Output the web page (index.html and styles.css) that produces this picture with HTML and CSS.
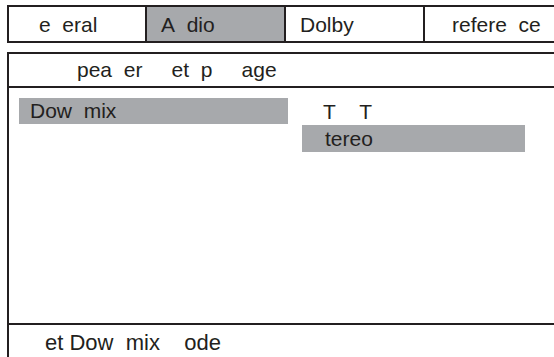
FILE: index.html
```html
<!DOCTYPE html>
<html lang="en">
<head>
    <meta charset="UTF-8">
    <meta name="viewport" content="width=device-width, initial-scale=1.0">
    <title>Speaker Setup</title>
    <link rel="stylesheet" href="styles.css">
</head>

<body>
    <div class="screen">
        <!-- Top menu tabs -->
        <div class="tabs">
            <div class="tab tab-first">e&nbsp;&nbsp;eral</div>
            <div class="tab active">A&nbsp;&nbsp;dio</div>
            <div class="tab">Dolby</div>
            <div class="tab tab-last">refere&nbsp;&nbsp;ce</div>
        </div>

        <!-- Setup page -->
        <div class="panel">
            <div class="panel-head">pea&nbsp;&nbsp;er&nbsp;&nbsp;&nbsp;&nbsp;&nbsp;et&nbsp;&nbsp;p&nbsp;&nbsp;&nbsp;&nbsp;&nbsp;age</div>

            <div class="panel-body">
                <div class="items">
                    <div class="item selected">Dow&nbsp;&nbsp;mix</div>
                </div>
                <div class="options">
                    <div class="option option-lt">T&nbsp;&nbsp;&nbsp;&nbsp;T</div>
                    <div class="option selected">tereo</div>
                </div>
            </div>

            <div class="panel-foot">et Dow&nbsp;&nbsp;mix&nbsp;&nbsp;&nbsp;&nbsp;ode</div>
        </div>
    </div>
</body>
</html>
```

FILE: styles.css
```css
/* osd setup menu */
* {
    margin: 0;
    padding: 0;
    box-sizing: border-box;
}
body {
    background: #fff;
    width: 554px;
    height: 357px;
    overflow: hidden;
    color: #231f20;
    font-family: "Liberation Sans", Arial, sans-serif;
    font-size: 21px;
}
.screen {
    width: 580px;
    padding: 5px 0 0 7px;
}
.tabs {
    display: flex;
    border: 2px solid #231f20;
    height: 38px;
}
.tab {
    flex: 0 0 139px;
    border-left: 2px solid #231f20;
    padding: 2px 0 0 14px;
    line-height: 32px;
    white-space: nowrap;
}
.tab-first {
    flex-basis: 136px;
    border-left: none;
    padding-left: 30px;
}
.tab-last {
    padding-left: 27px;
}
.tab.active {
    background: #a7a9ac;
}
.panel {
    margin-top: 9px;
    border: 2px solid #231f20;
    height: 340px;
}
.panel-head {
    height: 34px;
    line-height: 32px;
    padding-left: 68px;
    border-bottom: 2px solid #231f20;
    white-space: nowrap;
}
.panel-body {
    display: flex;
    height: 235px;
    padding: 10px 0 0 10px;
}
.items {
    width: 283px;
}
.item {
    width: 269px;
    height: 26px;
    line-height: 26px;
    padding-left: 11px;
}
.options {
    width: 223px;
}
.option {
    height: 27px;
    line-height: 27px;
    padding-left: 23px;
    white-space: nowrap;
}
.option-lt {
    padding-left: 21px;
}
.selected {
    background: #a7a9ac;
}
.panel-foot {
    border-top: 2px solid #231f20;
    padding: 2px 0 0 36px;
    font-size: 22px;
    line-height: 31px;
    white-space: nowrap;
}
```
